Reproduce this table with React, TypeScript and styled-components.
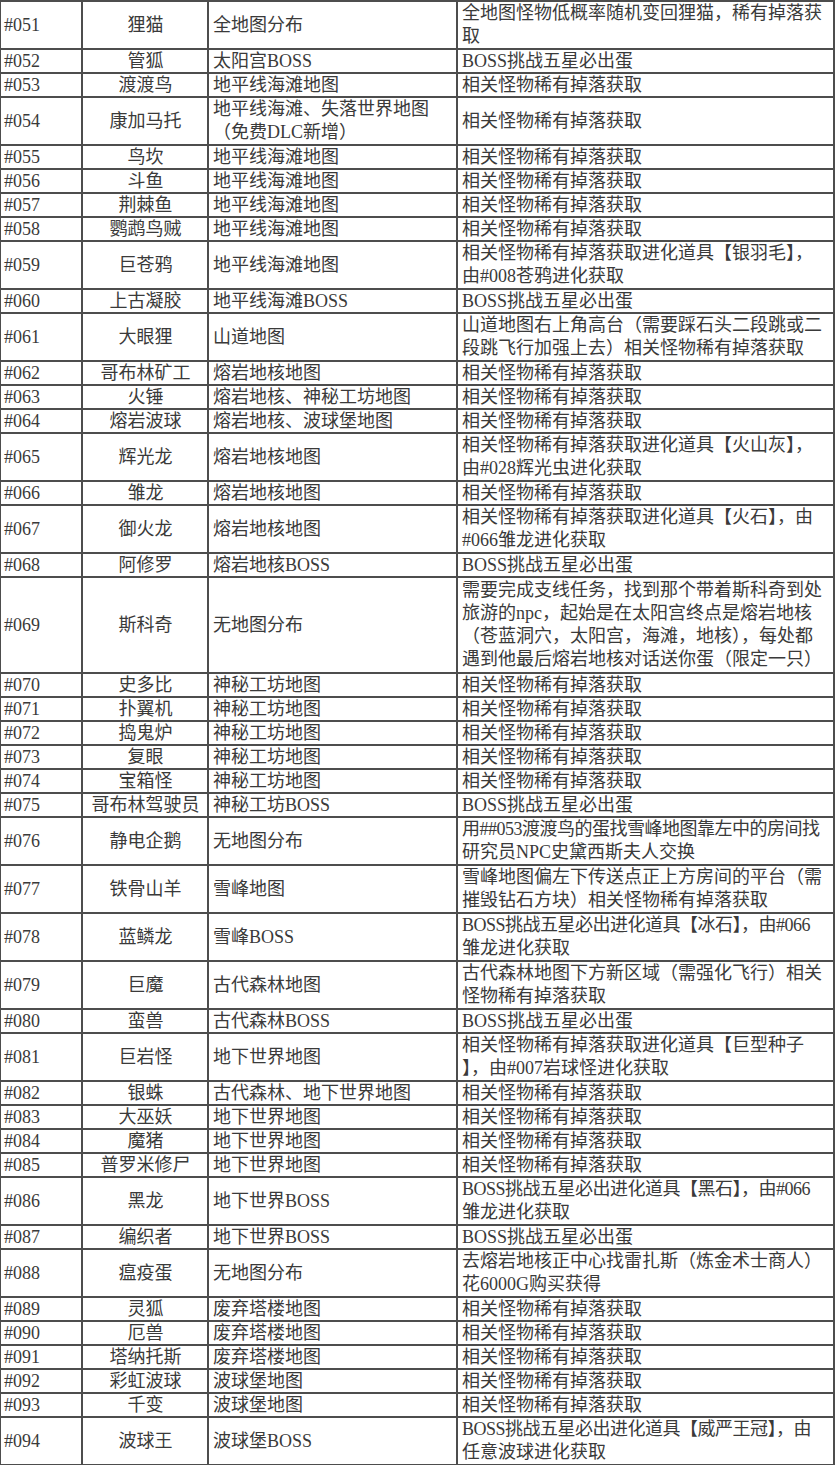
import React from "react";
import styled, { createGlobalStyle } from "styled-components";

const GlobalStyle = createGlobalStyle`
  *, *::before, *::after { box-sizing: border-box; }
  html, body { margin: 0; padding: 0; background: #ffffff; }
  body {
    font-family: "Liberation Serif", "Noto Sans CJK SC", serif;
    color: #3a3a3a;
  }
`;

type Entry = {
  id: string;
  name: string;
  loc: string[];
  note: string[];
  units: number;
};

const e = (id: string, name: string, loc: string | string[], note: string | string[], units = 1): Entry => ({
  id,
  name,
  loc: Array.isArray(loc) ? loc : [loc],
  note: Array.isArray(note) ? note : [note],
  units,
});

const DROP = "相关怪物稀有掉落获取";
const BOSS = "BOSS挑战五星必出蛋";

const rows: Entry[] = [
  e("#051", "狸猫", "全地图分布", ["全地图怪物低概率随机变回狸猫，稀有掉落获", "取"], 2),
  e("#052", "管狐", "太阳宫BOSS", BOSS),
  e("#053", "渡渡鸟", "地平线海滩地图", DROP),
  e("#054", "康加马托", ["地平线海滩、失落世界地图", "（免费DLC新增）"], DROP, 2),
  e("#055", "鸟坎", "地平线海滩地图", DROP),
  e("#056", "斗鱼", "地平线海滩地图", DROP),
  e("#057", "荆棘鱼", "地平线海滩地图", DROP),
  e("#058", "鹦鹉鸟贼", "地平线海滩地图", DROP),
  e("#059", "巨苍鸦", "地平线海滩地图", ["相关怪物稀有掉落获取进化道具【银羽毛】，", "由#008苍鸦进化获取"], 2),
  e("#060", "上古凝胶", "地平线海滩BOSS", BOSS),
  e("#061", "大眼狸", "山道地图", ["山道地图右上角高台（需要踩石头二段跳或二", "段跳飞行加强上去）相关怪物稀有掉落获取"], 2),
  e("#062", "哥布林矿工", "熔岩地核地图", DROP),
  e("#063", "火锤", "熔岩地核、神秘工坊地图", DROP),
  e("#064", "熔岩波球", "熔岩地核、波球堡地图", DROP),
  e("#065", "辉光龙", "熔岩地核地图", ["相关怪物稀有掉落获取进化道具【火山灰】，", "由#028辉光虫进化获取"], 2),
  e("#066", "雏龙", "熔岩地核地图", DROP),
  e("#067", "御火龙", "熔岩地核地图", ["相关怪物稀有掉落获取进化道具【火石】，由", "#066雏龙进化获取"], 2),
  e("#068", "阿修罗", "熔岩地核BOSS", BOSS),
  e(
    "#069",
    "斯科奇",
    "无地图分布",
    [
      "需要完成支线任务，找到那个带着斯科奇到处",
      "旅游的npc，起始是在太阳宫终点是熔岩地核",
      "（苍蓝洞穴，太阳宫，海滩，地核），每处都",
      "遇到他最后熔岩地核对话送你蛋（限定一只）",
    ],
    4
  ),
  e("#070", "史多比", "神秘工坊地图", DROP),
  e("#071", "扑翼机", "神秘工坊地图", DROP),
  e("#072", "捣鬼炉", "神秘工坊地图", DROP),
  e("#073", "复眼", "神秘工坊地图", DROP),
  e("#074", "宝箱怪", "神秘工坊地图", DROP),
  e("#075", "哥布林驾驶员", "神秘工坊BOSS", BOSS),
  e("#076", "静电企鹅", "无地图分布", ["用##053渡渡鸟的蛋找雪峰地图靠左中的房间找", "研究员NPC史黛西斯夫人交换"], 2),
  e("#077", "铁骨山羊", "雪峰地图", ["雪峰地图偏左下传送点正上方房间的平台（需", "摧毁钻石方块）相关怪物稀有掉落获取"], 2),
  e("#078", "蓝鳞龙", "雪峰BOSS", ["BOSS挑战五星必出进化道具【冰石】，由#066", "雏龙进化获取"], 2),
  e("#079", "巨魔", "古代森林地图", ["古代森林地图下方新区域（需强化飞行）相关", "怪物稀有掉落获取"], 2),
  e("#080", "蛮兽", "古代森林BOSS", BOSS),
  e("#081", "巨岩怪", "地下世界地图", ["相关怪物稀有掉落获取进化道具【巨型种子", "】，由#007岩球怪进化获取"], 2),
  e("#082", "银蛛", "古代森林、地下世界地图", DROP),
  e("#083", "大巫妖", "地下世界地图", DROP),
  e("#084", "魔猪", "地下世界地图", DROP),
  e("#085", "普罗米修尸", "地下世界地图", DROP),
  e("#086", "黑龙", "地下世界BOSS", ["BOSS挑战五星必出进化道具【黑石】，由#066", "雏龙进化获取"], 2),
  e("#087", "编织者", "地下世界BOSS", BOSS),
  e("#088", "瘟疫蛋", "无地图分布", ["去熔岩地核正中心找雷扎斯（炼金术士商人）", "花6000G购买获得"], 2),
  e("#089", "灵狐", "废弃塔楼地图", DROP),
  e("#090", "厄兽", "废弃塔楼地图", DROP),
  e("#091", "塔纳托斯", "废弃塔楼地图", DROP),
  e("#092", "彩虹波球", "波球堡地图", DROP),
  e("#093", "千变", "波球堡地图", DROP),
  e("#094", "波球王", "波球堡BOSS", ["BOSS挑战五星必出进化道具【威严王冠】，由", "任意波球进化获取"], 2),
];

const UNIT = 24;
const LINE = "#4d4d4d";

const Sheet = styled.div`
  width: 835px;
  border-left: 1px solid ${LINE};
  border-top: 2px solid ${LINE};
  overflow: hidden;
`;

const Row = styled.div<{ $units: number }>`
  display: grid;
  grid-template-columns: 82px 126px 249px 377px;
  height: ${(p) => p.$units * UNIT}px;
  border-bottom: 2px solid ${LINE};
`;

const Cell = styled.div<{ $center?: boolean }>`
  display: flex;
  flex-direction: column;
  justify-content: center;
  align-items: ${(p) => (p.$center ? "center" : "flex-start")};
  padding: 0 3px 0 4px;
  border-right: 2px solid ${LINE};
  overflow: hidden;
  font-size: 18px;
  color: #3a3a3a;
  white-space: nowrap;
`;

const IdCell = styled(Cell)`
  padding-left: 3px;
  font-family: "Liberation Serif", serif;
`;

const TextLine = styled.div<{ $lh: number; $tight?: boolean }>`
  line-height: ${(p) => p.$lh}px;
  letter-spacing: ${(p) => (p.$tight ? "-0.5px" : "0")};
`;

function Lines({ lines, units }: { lines: string[]; units: number }) {
  const content = units * UNIT - 2;
  const lh = Math.min(content / lines.length, 23);
  return (
    <>
      {lines.map((l, i) => (
        <TextLine key={i} $lh={lh} $tight={l.length > 21}>
          {l}
        </TextLine>
      ))}
    </>
  );
}

export default function App() {
  return (
    <>
      <GlobalStyle />
      <Sheet>
        {rows.map((r) => (
          <Row key={r.id} $units={r.units}>
            <IdCell>
              <TextLine $lh={22}>{r.id}</TextLine>
            </IdCell>
            <Cell $center>
              <TextLine $lh={22}>{r.name}</TextLine>
            </Cell>
            <Cell>
              <Lines lines={r.loc} units={r.units} />
            </Cell>
            <Cell>
              <Lines lines={r.note} units={r.units} />
            </Cell>
          </Row>
        ))}
      </Sheet>
    </>
  );
}
